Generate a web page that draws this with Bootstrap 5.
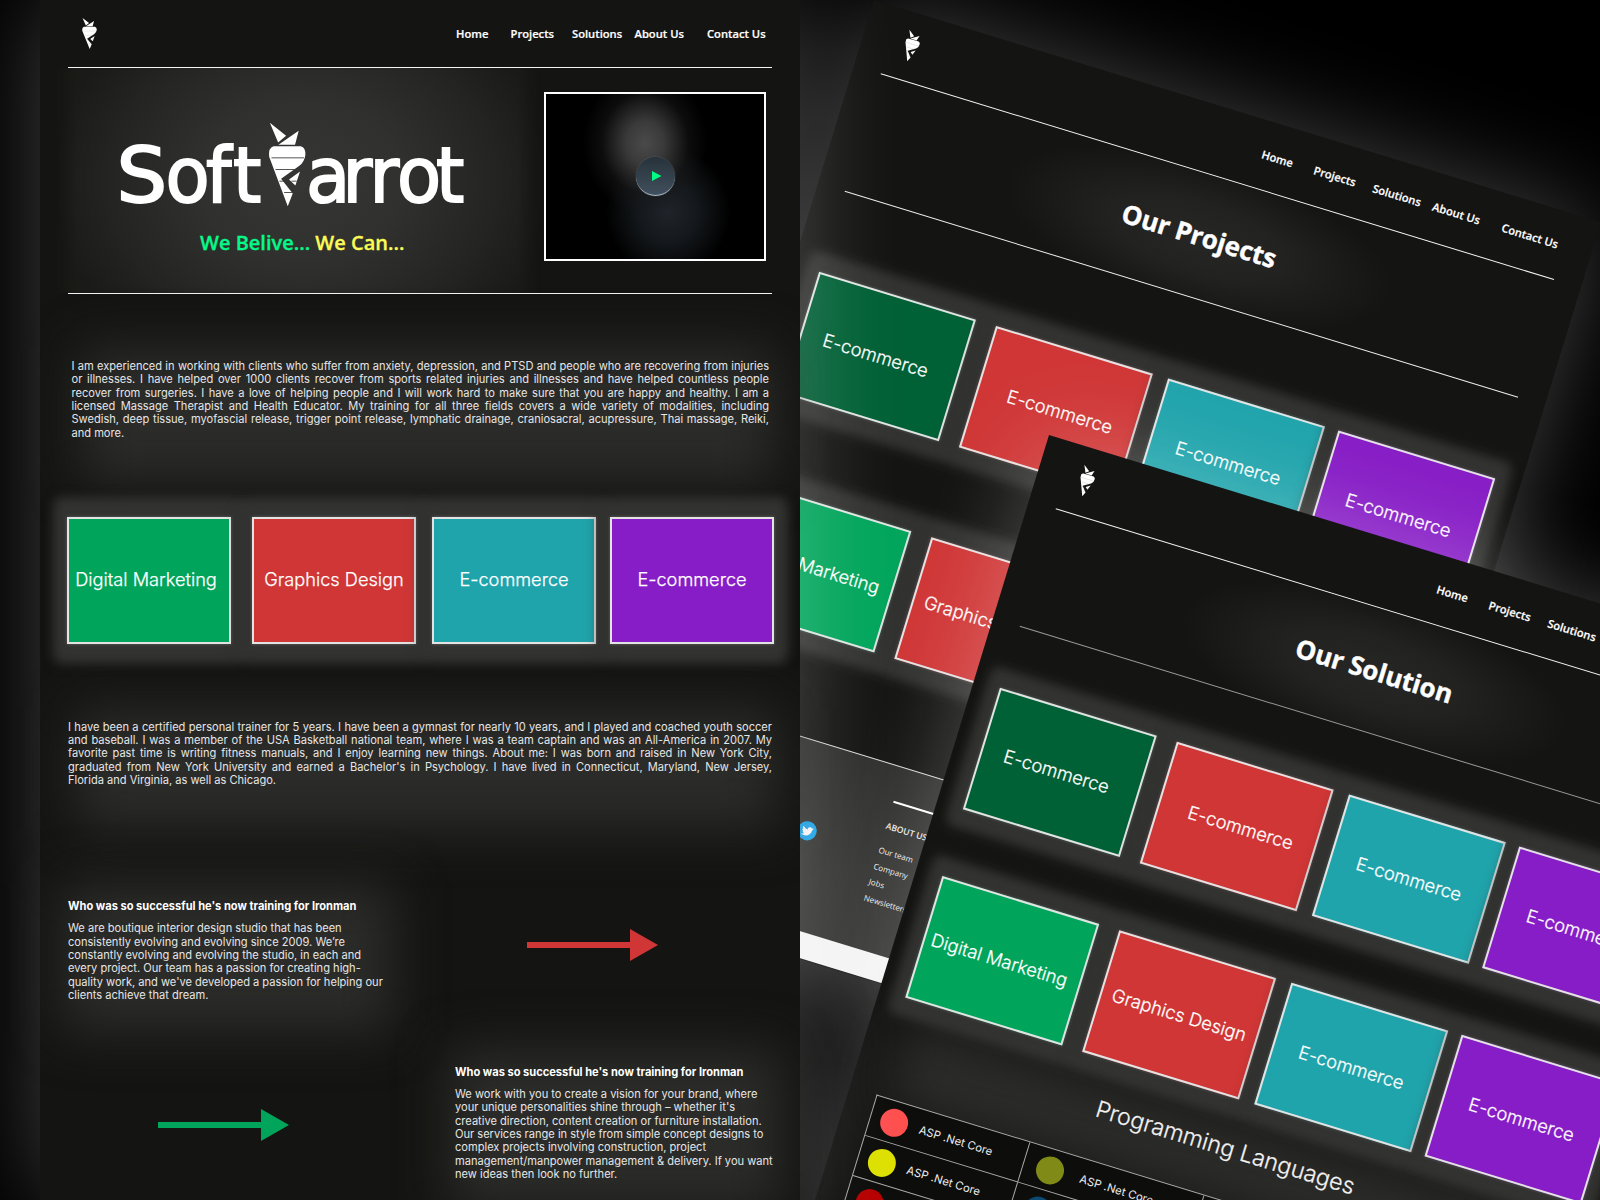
<!DOCTYPE html>
<html lang="en">
<head>
<meta charset="utf-8">
<title>Soft Carrot</title>
<link href="https://cdn.jsdelivr.net/npm/bootstrap@5.3.0/dist/css/bootstrap.min.css" rel="stylesheet">
<style>
body{background:#000;color:#fff;font-family:Inter,"Liberation Sans",sans-serif;font-size:11.08px;line-height:13.35px}
.board{width:1600px;height:1200px}
.sheet{width:760px;background:#141412;box-shadow:0 0 95px 0 rgba(255,255,255,.25)}
.sheet>*{position:relative}
.sheet-home{left:40px;top:0;height:1200px}
.sheet-projects{left:873.5px;top:0;height:939px;transform:rotate(17deg);transform-origin:0 0}
.sheet-solution{left:1048.5px;top:435px;height:1100px;transform:rotate(17deg);transform-origin:0 0}
.topbar{height:69px;margin:0 28px;border-bottom:1px solid #f4f4f4;padding-left:14px}
.sheet-home .topbar{height:68px}
.topbar .logo{width:15px;height:31px;margin-top:18px;--slit:#bbb}
.menu{display:grid;grid-template-columns:54.5px 61.5px 62.5px 72.5px 60px;margin-left:359px;font:600 11.2px/14px "Open Sans",sans-serif;-webkit-text-stroke:.2px #fff;padding-top:27px;white-space:nowrap}
.hero{height:226px;margin:0 28px;border-bottom:1px solid #f4f4f4}
.hero-glow{left:-14px;top:0;width:486px;height:225px;background:radial-gradient(ellipse 255px 200px at 51% 50%,#363634 0,#30302e 40%,#232321 78%,rgba(30,30,28,.6) 100%);-webkit-mask-image:linear-gradient(90deg,transparent,#000 22px,#000 464px,transparent);mask-image:linear-gradient(90deg,transparent,#000 22px,#000 464px,transparent)}
.wordmark{width:400px;height:110px;margin:48px 0 0 32px;display:block;overflow:visible;--slit:#333}
.wordmark text{font-family:"DejaVu Sans",sans-serif;font-size:76px;fill:#fff;stroke:#fff;stroke-width:2px}
.slogan{font:600 20px/26px "Open Sans",sans-serif;-webkit-text-stroke:.3px;margin:4px 0 0 132px;white-space:nowrap}
.mint{color:#05f98a}.lemon{color:#fbfb58}
.video{width:222px;height:169px;border:2px solid #fff;margin:24px 6px 0 0;background:radial-gradient(ellipse 62px 72px at 99px 49px,#4a4a4a 0,#3a3a3a 30%,rgba(25,25,25,.5) 70%,transparent 100%),radial-gradient(ellipse 62px 65px at 122px 118px,#1f242a 0,#15191d 45%,transparent 100%),#000}
.play{width:39px;height:39px;background:linear-gradient(#27323b,#40505c);border-bottom:1px solid #a9bac6;box-shadow:0 0 1px #7b8b97}
.copy{color:#e6e6e6;white-space:nowrap}
.copy span{display:block;text-align:justify;text-align-last:justify}
.copy span:last-child{text-align-last:left}
.haze{isolation:isolate}
.haze::before{content:"";position:absolute;z-index:-1;inset:-12px -6px -42px 8px;background:#2b2b29;filter:blur(25px)}
.intro{margin:66px 31px 0 31.5px}
.services{display:grid;grid-template-columns:185px 180px 178px 164px;padding-left:27px;z-index:1}
.services::before{content:"";position:absolute;z-index:-1;inset:-19px 14px -19px 15px;background:#353533;filter:blur(6px)}
.tile{width:164px;height:127px;border:2px solid #e3e3e3;box-shadow:0 0 12px 11px rgba(50,50,48,.75),0 0 3px #ddd;font-size:18.2px;font-weight:300;-webkit-text-stroke:.25px #fff;white-space:nowrap}
.t-green{background:#00a55b;padding-right:6px}.t-forest{background:#006036;padding-right:7px}.t-red{background:#d03636}.t-teal{background:#20a4ac}.t-violet{background:#871dc6}
.t-forest+.t-red{padding-left:8px}
.story{margin:77px 28px 0}
.feature{color:#e6e6e6;white-space:nowrap}
.feature h3{font-size:11.08px;line-height:14px;font-weight:700;margin:0 0 9px;color:#fff}
.feature.haze::before{inset:-16px -10px -30px -6px}
.page-title{height:123px;margin:0 28px;border-bottom:1px solid #eee;font:700 26px/32px "Open Sans",sans-serif;-webkit-text-stroke:.4px #fff;letter-spacing:-.1px;background:radial-gradient(ellipse 200px 75px at 50% 52%,#262624 0,#222220 45%,transparent 100%)}
.thin{border-bottom-color:#999}
.foot{height:213px;margin-top:101px;padding-left:28px;background:radial-gradient(ellipse 400px 300px at 20% 60%,#373735,#232321)}
.foot::before{content:"";display:block;height:1px;width:704px;background:#ddd}
.foot ul{font:400 8px/16.8px "Open Sans",sans-serif;color:#eee}
.langs{display:grid;grid-template-columns:160px 182px 181px 181px;margin:36px 28px 0;border-top:1px solid #aaa;border-left:1px solid #aaa;background:#0d0d0c}
.langs>div{height:42.2px;border-right:1px solid #aaa;border-bottom:1px solid #aaa;padding-left:10px;gap:12px;font-size:11.3px;font-weight:400;color:#eee}
.langs>div:nth-child(n+2):not(:nth-child(4n+1)){padding-left:13px;gap:17px}
.langs i{width:28px;height:28px;border-radius:50%}
.h-lang{font-size:23.1px;line-height:30px;font-weight:300;-webkit-text-stroke:.25px #f2f2f2;color:#f2f2f2}
</style>
<script src="https://cdn.jsdelivr.net/npm/bootstrap@5.3.0/dist/js/bootstrap.bundle.min.js"></script>
</head>
<body>
<svg width="0" height="0" class="position-absolute">
<symbol id="carrot" viewBox="505 37 113 252" preserveAspectRatio="none">
<path fill="#fff" d="M509 38 558 77 534 97ZM596 62 585 104H535ZM520 108H602Q618 112 616 135Q613 155 598 167L543 206L578 250L563 288L507 140Q504 112 520 108ZM600 184 586 226 567 208Z"/>
<path style="stroke:var(--slit)" stroke-width="2.5" d="M514 143H612M526 178H584M538 213H552M574 213H590M552 247H577"/>
</symbol>
</svg>
<main class="board position-relative overflow-hidden">

<section class="sheet sheet-projects position-absolute">
  <nav class="topbar d-flex">
    <svg class="logo"><use href="#carrot"/></svg>
    <div class="menu"><span>Home</span><span>Projects</span><span>Solutions</span><span>About Us</span><span>Contact Us</span></div>
  </nav>
  <div class="page-title d-flex align-items-center justify-content-center">Our Projects</div>
  <div class="services" style="margin-top:84px">
    <div class="tile t-forest d-flex align-items-center justify-content-center">E-commerce</div>
    <div class="tile t-red d-flex align-items-center justify-content-center">E-commerce</div>
    <div class="tile t-teal d-flex align-items-center justify-content-center">E-commerce</div>
    <div class="tile t-violet d-flex align-items-center justify-content-center">E-commerce</div>
  </div>
  <div class="services" style="margin-top:94px">
    <div class="tile t-green d-flex align-items-center justify-content-center">Digital Marketing</div>
    <div class="tile t-red d-flex align-items-center justify-content-center">Graphics Design</div>
    <div class="tile t-teal d-flex align-items-center justify-content-center">E-commerce</div>
    <div class="tile t-violet d-flex align-items-center justify-content-center">E-commerce</div>
  </div>
  <footer class="foot">
    <div class="d-flex">
      <svg width="20" height="20" viewBox="0 0 24 24" style="margin:78px 0 0 141px"><circle cx="12" cy="12" r="11.5" fill="#1da8ee"/><path fill="#fff" d="M19 8.2c-.5.2-1 .4-1.600.4.6-.3 1-.9 1.200-1.500-.5.300-1.100.5-1.800.7a2.800 2.800 0 0 0-4.800 2.600A8 8 0 0 1 6.200 7.400a2.800 2.800 0 0 0 .9 3.800c-.5 0-.9-.1-1.300-.3 0 1.300 1 2.500 2.300 2.800-.4.1-.8.1-1.300 0 .4 1.200 1.400 2 2.700 2A5.700 5.700 0 0 1 5.300 17c4.900 3 12.400.4 12.300-7.500.6-.3 1-.8 1.400-1.300Z"/></svg>
      <div style="margin:34px 0 0 64px">
        <div class="bg-white" style="width:130px;height:2px"></div>
        <ul class="list-unstyled m-0" style="padding-top:16px"><li class="fw-semibold" style="margin-bottom:8px;font-size:8.600px">ABOUT US</li><li>Our team</li><li>Company</li><li>Jobs</li><li>Newsletters</li></ul>
      </div>
    </div>
  </footer>
  <div style="height:26px;background:#f4f4f4;margin-top:-26px"></div>
</section>

<section class="sheet sheet-solution position-absolute">
  <nav class="topbar d-flex">
    <svg class="logo"><use href="#carrot"/></svg>
    <div class="menu"><span>Home</span><span>Projects</span><span>Solutions</span><span>About Us</span><span>Contact Us</span></div>
  </nav>
  <div class="page-title thin d-flex align-items-center justify-content-center">Our Solution</div>
  <div class="services" style="margin-top:64px">
    <div class="tile t-forest d-flex align-items-center justify-content-center">E-commerce</div>
    <div class="tile t-red d-flex align-items-center justify-content-center">E-commerce</div>
    <div class="tile t-teal d-flex align-items-center justify-content-center">E-commerce</div>
    <div class="tile t-violet d-flex align-items-center justify-content-center">E-commerce</div>
  </div>
  <div class="services" style="margin-top:70px">
    <div class="tile t-green d-flex align-items-center justify-content-center">Digital Marketing</div>
    <div class="tile t-red d-flex align-items-center justify-content-center">Graphics Design</div>
    <div class="tile t-teal d-flex align-items-center justify-content-center">E-commerce</div>
    <div class="tile t-violet d-flex align-items-center justify-content-center">E-commerce</div>
  </div>
  <div class="h-lang text-center haze" style="margin:35px 34px 0 28px">Programming Languages</div>
  <div class="langs">
    <div class="d-flex align-items-center"><i style="background:#ff5050"></i>ASP .Net Core</div>
    <div class="d-flex align-items-center"><i style="background:#7f8a17"></i>ASP .Net Core</div>
    <div></div><div></div>
    <div class="d-flex align-items-center"><i style="background:#dde000"></i>ASP .Net Core</div>
    <div class="d-flex align-items-center"><i style="background:#0b4a72"></i></div>
    <div></div><div></div>
    <div class="d-flex align-items-center"><i style="background:#b60000"></i></div>
    <div></div><div></div><div></div>
  </div>
</section>

<section class="sheet sheet-home position-absolute">
  <nav class="topbar d-flex">
    <svg class="logo"><use href="#carrot"/></svg>
    <div class="menu"><span>Home</span><span>Projects</span><span>Solutions</span><span>About Us</span><span>Contact Us</span></div>
  </nav>
  <header class="hero d-flex justify-content-between">
    <div class="hero-glow position-absolute"></div>
    <div class="position-relative">
      <svg class="wordmark" viewBox="100 116 400 110">
        <text transform="scale(1.05 1)" y="202" x="111">S</text>
        <g transform="scale(.95 1)">
          <text y="202" x="174.200 216.800 245.300">oft</text>
          <text y="202" x="322.100 360.500 388.900 417.900 458.900">arrot</text>
        </g>
        <use href="#carrot" x="268.500" y="122.500" width="37.500" height="84"/>
      </svg>
      <div class="slogan"><span class="mint">We Belive...</span> <span class="lemon">We Can...</span></div>
    </div>
    <div class="video d-flex align-items-center justify-content-center">
      <div class="play rounded-circle d-flex align-items-center justify-content-center"><svg width="10" height="10" style="margin-left:3px"><path d="M0 0 9.500 5 0 10Z" fill="#00fb85"/></svg></div>
    </div>
  </header>
  <div class="copy intro haze">
    <span>I am experienced in working with clients who suffer from anxiety, depression, and PTSD and people who are recovering from injuries</span>
    <span>or illnesses. I have helped over 1000 clients recover from sports related injuries and illnesses and have helped countless people</span>
    <span>recover from surgeries. I have a love of helping people and I will work hard to make sure that you are happy and healthy. I am a</span>
    <span>licensed Massage Therapist and Health Educator. My training for all three fields covers a wide variety of modalities, including</span>
    <span>Swedish, deep tissue, myofascial release, trigger point release, lymphatic drainage, craniosacral, acupressure, Thai massage, Reiki,</span>
    <span>and more.</span>
  </div>
  <div class="services" style="margin-top:76.500px">
    <div class="tile t-green d-flex align-items-center justify-content-center">Digital Marketing</div>
    <div class="tile t-red d-flex align-items-center justify-content-center">Graphics Design</div>
    <div class="tile t-teal d-flex align-items-center justify-content-center">E-commerce</div>
    <div class="tile t-violet d-flex align-items-center justify-content-center">E-commerce</div>
  </div>
  <div class="copy story haze">
    <span>I have been a certified personal trainer for 5 years. I have been a gymnast for nearly 10 years, and I played and coached youth soccer</span>
    <span>and baseball. I was a member of the USA Basketball national team, where I was a team captain and was an All-America in 2007. My</span>
    <span>favorite past time is writing fitness manuals, and I enjoy learning new things. About me: I was born and raised in New York City,</span>
    <span>graduated from New York University and earned a Bachelor's in Psychology. I have lived in Connecticut, Maryland, New Jersey,</span>
    <span>Florida and Virginia, as well as Chicago.</span>
  </div>
  <div class="d-flex" style="padding:112px 28px 0">
    <div class="feature haze position-relative" style="width:315px">
      <h3>Who was so successful he's now training for Ironman</h3>
      We are boutique interior design studio that has been<br>consistently evolving and evolving since 2009. We’re<br>constantly evolving and evolving the studio, in each and<br>every project. Our team has a passion for creating high-<br>quality work, and we've developed a passion for helping our<br>clients achieve that dream.
    </div>
    <svg width="131" height="32" style="margin:30px 0 0 144px"><path fill="#d03636" d="M0 13H103V0L131 16 103 32V19H0Z"/></svg>
  </div>
  <div class="d-flex justify-content-between" style="padding:62.500px 28px 0">
    <svg width="131" height="32" style="margin:44px 0 0 90px"><path fill="#00a55b" d="M0 13H103V0L131 16 103 32V19H0Z"/></svg>
    <div class="feature haze position-relative" style="width:317px">
      <h3>Who was so successful he's now training for Ironman</h3>
      We work with you to create a vision for your brand, where<br>your unique personalities shine through – whether it's<br>creative direction, content creation or furniture installation.<br>Our services range in style from simple concept designs to<br>complex projects involving construction, project<br>management/manpower management &amp; delivery. If you want<br>new ideas then look no further.
    </div>
  </div>
</section>
</main>
</body>
</html>
